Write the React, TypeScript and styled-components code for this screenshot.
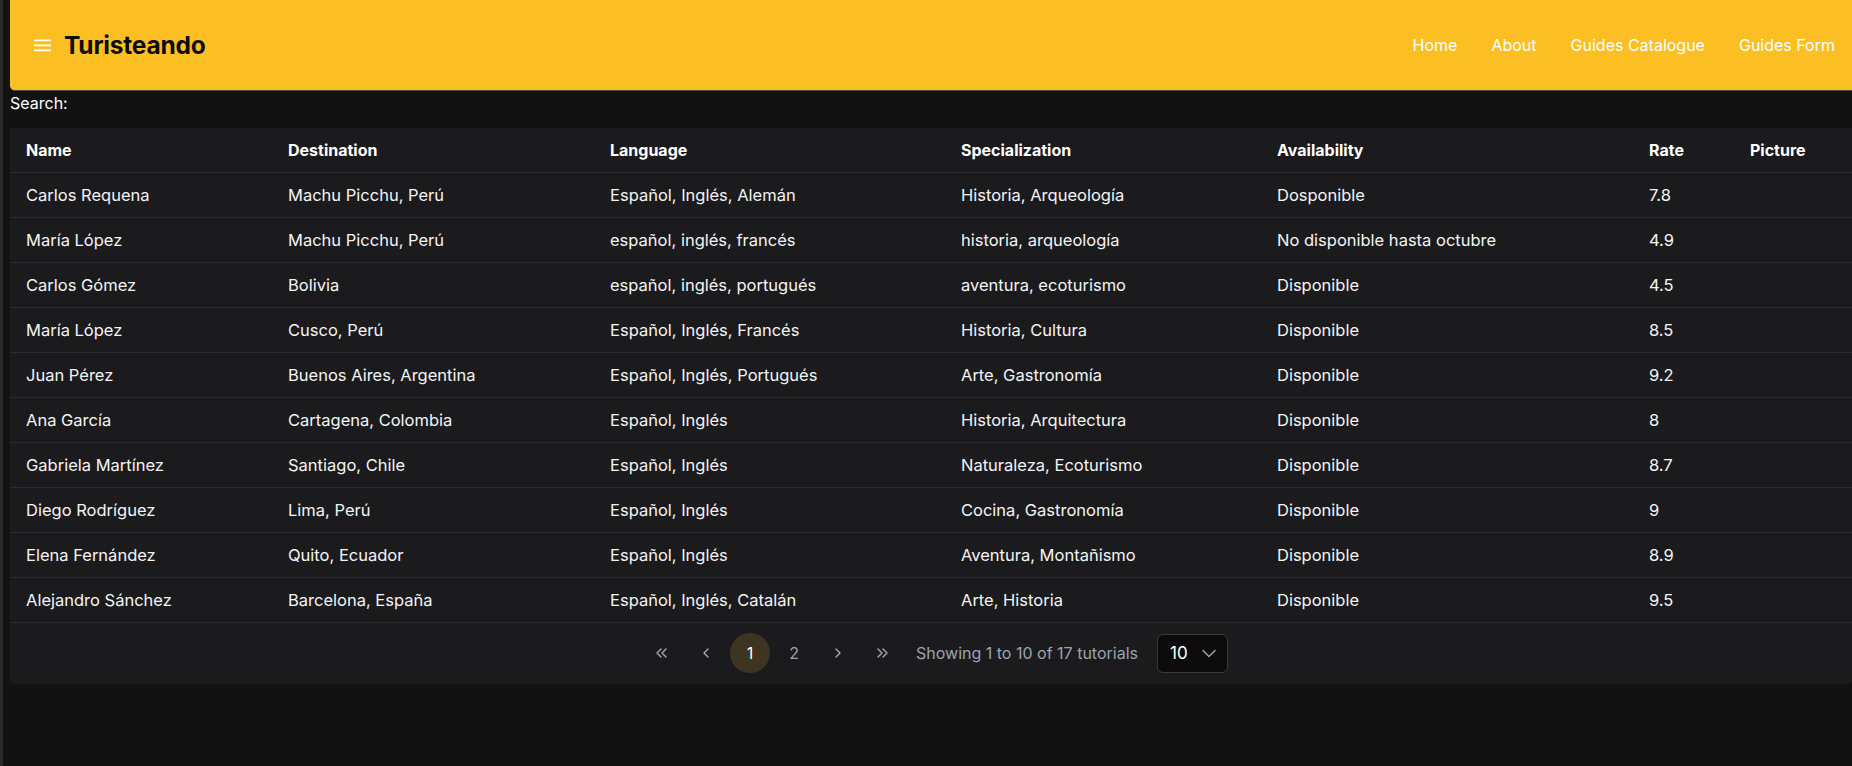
import React from 'react';
import styled, { createGlobalStyle } from 'styled-components';

const GlobalStyle = createGlobalStyle`
  html, body {
    margin: 0;
    padding: 0;
    background: #121212;
    font-family: Inter, 'Noto Sans', sans-serif;
    color: #fff;
  }
  * { box-sizing: border-box; }
`;

const guides = [
  ['Carlos Requena', 'Machu Picchu, Perú', 'Español, Inglés, Alemán', 'Historia, Arqueología', 'Dosponible', '7.8'],
  ['María López', 'Machu Picchu, Perú', 'español, inglés, francés', 'historia, arqueología', 'No disponible hasta octubre', '4.9'],
  ['Carlos Gómez', 'Bolivia', 'español, inglés, portugués', 'aventura, ecoturismo', 'Disponible', '4.5'],
  ['María López', 'Cusco, Perú', 'Español, Inglés, Francés', 'Historia, Cultura', 'Disponible', '8.5'],
  ['Juan Pérez', 'Buenos Aires, Argentina', 'Español, Inglés, Portugués', 'Arte, Gastronomía', 'Disponible', '9.2'],
  ['Ana García', 'Cartagena, Colombia', 'Español, Inglés', 'Historia, Arquitectura', 'Disponible', '8'],
  ['Gabriela Martínez', 'Santiago, Chile', 'Español, Inglés', 'Naturaleza, Ecoturismo', 'Disponible', '8.7'],
  ['Diego Rodríguez', 'Lima, Perú', 'Español, Inglés', 'Cocina, Gastronomía', 'Disponible', '9'],
  ['Elena Fernández', 'Quito, Ecuador', 'Español, Inglés', 'Aventura, Montañismo', 'Disponible', '8.9'],
  ['Alejandro Sánchez', 'Barcelona, España', 'Español, Inglés, Catalán', 'Arte, Historia', 'Disponible', '9.5'],
];

const columns = [
  { title: 'Name', width: 262 },
  { title: 'Destination', width: 322 },
  { title: 'Language', width: 351 },
  { title: 'Specialization', width: 316 },
  { title: 'Availability', width: 372 },
  { title: 'Rate', width: 101 },
  { title: 'Picture', width: 118 },
];

const Page = styled.div`
  min-height: 766px;
  border-left: 3px solid #2b2b2b;
  padding-left: 7px;
`;

const Navbar = styled.header`
  height: 91px;
  background: #fbbf24;
  border-bottom: 1px solid #4a4a4a;
  border-bottom-left-radius: 5px;
  display: flex;
  align-items: center;
  justify-content: space-between;
  padding-left: 24px;
`;

const Brand = styled.div`
  display: flex;
  align-items: center;
  gap: 13px;
`;

const MenuBtn = styled.button`
  background: transparent;
  border: none;
  padding: 0;
  display: flex;
  cursor: pointer;
`;

const Title = styled.h1`
  margin: 0;
  font-size: 24.5px;
  font-weight: 700;
  color: #0c0c0c;
  letter-spacing: -0.2px;
`;

const NavLinks = styled.ul`
  list-style: none;
  margin: 0;
  padding: 0;
  display: flex;
`;

const NavItem = styled.li`
  a {
    display: block;
    padding: 0 17px;
    color: #fff;
    text-decoration: none;
    font-size: 16px;
  }
`;

const SearchRow = styled.div`
  height: 37px;
  padding-top: 3px;
  font-size: 16px;
  line-height: 19px;
  color: #fff;
`;

const TableCard = styled.div`
  background: #1b1b1d;
  border-radius: 0 0 5px 5px;
`;

const Table = styled.table`
  width: 100%;
  border-collapse: collapse;
  table-layout: fixed;
  font-size: 16.5px;
`;

const HeadCell = styled.th`
  text-align: left;
  font-weight: 700;
  font-size: 16px;
  height: 44px;
  padding: 0 16px;
  border-bottom: 1px solid #2b2b2e;
  color: #fff;
`;

const Cell = styled.td`
  height: 45px;
  padding: 0 16px;
  border-bottom: 1px solid #2b2b2e;
  color: #f4f4f5;
  white-space: nowrap;
`;

const Footer = styled.div`
  height: 61px;
  display: flex;
  align-items: center;
  justify-content: center;
  gap: 4px;
  padding-left: 8px;
`;

const PageBtn = styled.button<{ $active?: boolean }>`
  width: 40px;
  height: 40px;
  border-radius: 50%;
  border: none;
  background: ${(p) => (p.$active ? '#3d3422' : 'transparent')};
  color: ${(p) => (p.$active ? '#fff' : '#a1a1aa')};
  font-family: inherit;
  font-size: 16px;
  display: flex;
  align-items: center;
  justify-content: center;
  cursor: pointer;
  padding: 0;
`;

const Summary = styled.span`
  color: #9ca3af;
  font-size: 16px;
  margin: 0 15px 0 10px;
`;

const PerPage = styled.div`
  width: 71px;
  height: 39px;
  background: #0b0b0c;
  border: 1px solid #3a3a3d;
  border-radius: 6px;
  display: flex;
  align-items: center;
  justify-content: space-between;
  padding: 0 10px 0 12px;
  font-size: 17px;
  color: #fff;
`;

const Chevron = ({ dir }: { dir: 'left' | 'right' }) => (
  <svg width="14" height="14" viewBox="0 0 14 14" fill="none" stroke="#9ca3af" strokeWidth="1.5" strokeLinecap="round" strokeLinejoin="round">
    <path d={dir === 'left' ? 'M9 3 5 7l4 4' : 'M5 3l4 4-4 4'} />
  </svg>
);

const Double = ({ dir }: { dir: 'left' | 'right' }) => (
  <svg width="16" height="14" viewBox="0 0 16 14" fill="none" stroke="#9ca3af" strokeWidth="1.5" strokeLinecap="round" strokeLinejoin="round">
    {dir === 'left' ? <path d="M7 3 3 7l4 4M12 3 8 7l4 4" /> : <path d="M4 3l4 4-4 4M9 3l4 4-4 4" />}
  </svg>
);

const CaretDown = () => (
  <svg width="16" height="16" viewBox="0 0 16 16" fill="none" stroke="#9ca3af" strokeWidth="1.5" strokeLinecap="round" strokeLinejoin="round">
    <path d="M2 5.5l6 6 6-6" />
  </svg>
);

const App = () => {
  return (
    <Page>
      <GlobalStyle />
      <Navbar>
        <Brand>
          <MenuBtn type="button">
            <svg width="17" height="14" viewBox="0 0 17 14" stroke="#fff" strokeWidth="1.8">
              <path d="M0 2.3h17M0 7.3h17M0 12.3h17" />
            </svg>
          </MenuBtn>
          <Title>Turisteando</Title>
        </Brand>
        <NavLinks>
          <NavItem><a href="#">Home</a></NavItem>
          <NavItem><a href="#">About</a></NavItem>
          <NavItem><a href="#">Guides Catalogue</a></NavItem>
          <NavItem><a href="#">Guides Form</a></NavItem>
        </NavLinks>
      </Navbar>
      <SearchRow>Search:</SearchRow>
      <TableCard>
        <Table>
          <colgroup>
            {columns.map((c) => (
              <col key={c.title} style={{ width: c.width }} />
            ))}
          </colgroup>
          <thead>
            <tr>
              {columns.map((c) => (
                <HeadCell key={c.title}>{c.title}</HeadCell>
              ))}
            </tr>
          </thead>
          <tbody>
            {guides.map((g, i) => (
              <tr key={i}>
                {g.map((v, j) => (
                  <Cell key={j}>{v}</Cell>
                ))}
                <Cell />
              </tr>
            ))}
          </tbody>
        </Table>
        <Footer>
          <PageBtn><Double dir="left" /></PageBtn>
          <PageBtn><Chevron dir="left" /></PageBtn>
          <PageBtn $active>1</PageBtn>
          <PageBtn>2</PageBtn>
          <PageBtn><Chevron dir="right" /></PageBtn>
          <PageBtn><Double dir="right" /></PageBtn>
          <Summary>Showing 1 to 10 of 17 tutorials</Summary>
          <PerPage>
            10
            <CaretDown />
          </PerPage>
        </Footer>
      </TableCard>
    </Page>
  );
};

export default App;
